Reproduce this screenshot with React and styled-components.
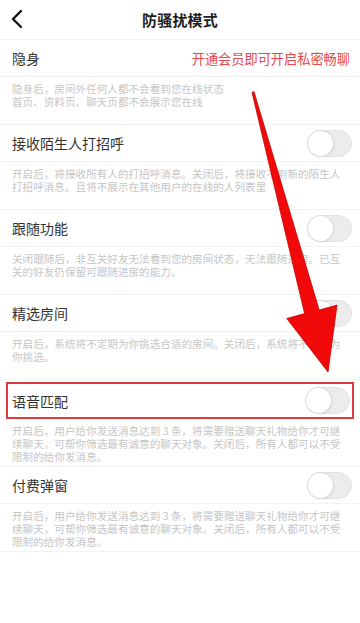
import React from "react";
import styled, { createGlobalStyle } from "styled-components";

const GlobalStyle = createGlobalStyle`
  body {
    margin: 0;
    background: #ffffff;
    font-family: "Noto Sans CJK SC", "Noto Sans", sans-serif;
  }
`;

const settings = [
  {
    title: "接收陌生人打招呼",
    desc: "开启后，将接收所有人的打招呼消息。关闭后，将接收不到新的陌生人打招呼消息。且将不展示在其他用户的在线的人列表里",
  },
  {
    title: "跟随功能",
    desc: "关闭跟随后，非互关好友无法看到您的房间状态，无法跟随进房。已互关的好友仍保留可跟随进房的能力。",
  },
  {
    title: "精选房间",
    desc: "开启后，系统将不定期为你挑选合适的房间。关闭后，系统将不会再为你挑选。",
  },
  {
    title: "语音匹配",
    desc: "开启后，用户给你发送消息达到 3 条，将需要赠送聊天礼物给你才可继续聊天，可帮你筛选最有诚意的聊天对象。关闭后，所有人都可以不受限制的给你发消息。",
    marked: true,
  },
  {
    title: "付费弹窗",
    desc: "开启后，用户给你发送消息达到 3 条，将需要赠送聊天礼物给你才可继续聊天，可帮你筛选最有诚意的聊天对象。关闭后，所有人都可以不受限制的给你发消息。",
  },
];

const Page = styled.div`
  position: relative;
  width: 360px;
  height: 623px;
  overflow: hidden;
  background: #fff;
`;

const Header = styled.div`
  height: 39px;
  border-bottom: 1px solid #f3f3f3;
  display: flex;
  align-items: center;
  justify-content: center;
  position: relative;
`;

const Back = styled.svg`
  position: absolute;
  left: 9px;
  top: 9px;
`;

const Title = styled.div`
  font-size: 15px;
  font-weight: 700;
  color: #1e1e1e;
  letter-spacing: 0.2px;
`;

const Row = styled.div`
  height: ${(p) => (p.$marked ? "33px" : "36px")};
  display: flex;
  align-items: center;
  justify-content: space-between;
  padding: 0 ${(p) => (p.$marked ? "2px" : "8px")} 0 ${(p) => (p.$marked ? "4px" : "12px")};
  margin: ${(p) => (p.$marked ? "2px 6px 0" : "0")};
  border: ${(p) => (p.$marked ? "2px solid #de3a3f" : "none")};
  border-bottom: ${(p) => (p.$marked ? "2px solid #de3a3f" : "1px solid #f3f3f3")};
`;

const Label = styled.div`
  font-size: 14px;
  color: #333;
`;

const Promo = styled.div`
  font-size: 13.2px;
  color: #e6474b;
  padding-right: 2px;
`;

const Desc = styled.div`
  height: 42px;
  padding: 5px 18px 0 12px;
  font-size: 10.6px;
  line-height: 13px;
  color: #c6c6c6;
  border-bottom: 1px solid #f3f3f3;
`;

const DescText = styled.div`
  max-width: ${(p) => p.$width || "none"};
`;

const Track = styled.div`
  width: 43px;
  height: 25px;
  border-radius: 14px;
  background: #ececec;
  border: 1px solid #e2e2e2;
  position: relative;
`;

const Knob = styled.div`
  position: absolute;
  left: 0;
  top: 0;
  width: 25px;
  height: 25px;
  border-radius: 50%;
  background: #fff;
  box-shadow: 0 0 0 1px #dcdcdc, 1px 1px 2px rgba(0, 0, 0, 0.12);
`;

const Arrow = styled.svg`
  position: absolute;
  left: 0;
  top: 0;
  pointer-events: none;
`;

const Toggle = () => (
  <Track>
    <Knob />
  </Track>
);

export default function App() {
  return (
    <Page>
      <GlobalStyle />
      <Header>
        <Back width="16" height="20" viewBox="0 0 16 20">
          <polyline
            points="12,2 4,10 12,18"
            fill="none"
            stroke="#111"
            strokeWidth="2.4"
            strokeLinecap="round"
            strokeLinejoin="round"
          />
        </Back>
        <Title>防骚扰模式</Title>
      </Header>

      <Row>
        <Label>隐身</Label>
        <Promo>开通会员即可开启私密畅聊</Promo>
      </Row>
      <Desc>
        <DescText $width="216px">
          隐身后，房间外任何人都不会看到您在线状态首页、资料页、聊天页都不会展示您在线
        </DescText>
      </Desc>

      {settings.map((s) => (
        <React.Fragment key={s.title}>
          <Row $marked={s.marked}>
            <Label>{s.title}</Label>
            <Toggle />
          </Row>
          <Desc>
            <DescText>{s.desc}</DescText>
          </Desc>
        </React.Fragment>
      ))}

      <Arrow width="360" height="623" viewBox="0 0 360 623">
        <polygon
          points="252,92.3 254,91.7 319.2,310 337,305.1 328,372 286.8,318.5 304.6,313.6"
          fill="#f20a0a"
          stroke="#c80000"
          strokeWidth="0.8"
          strokeLinejoin="round"
        />
      </Arrow>
    </Page>
  );
}
